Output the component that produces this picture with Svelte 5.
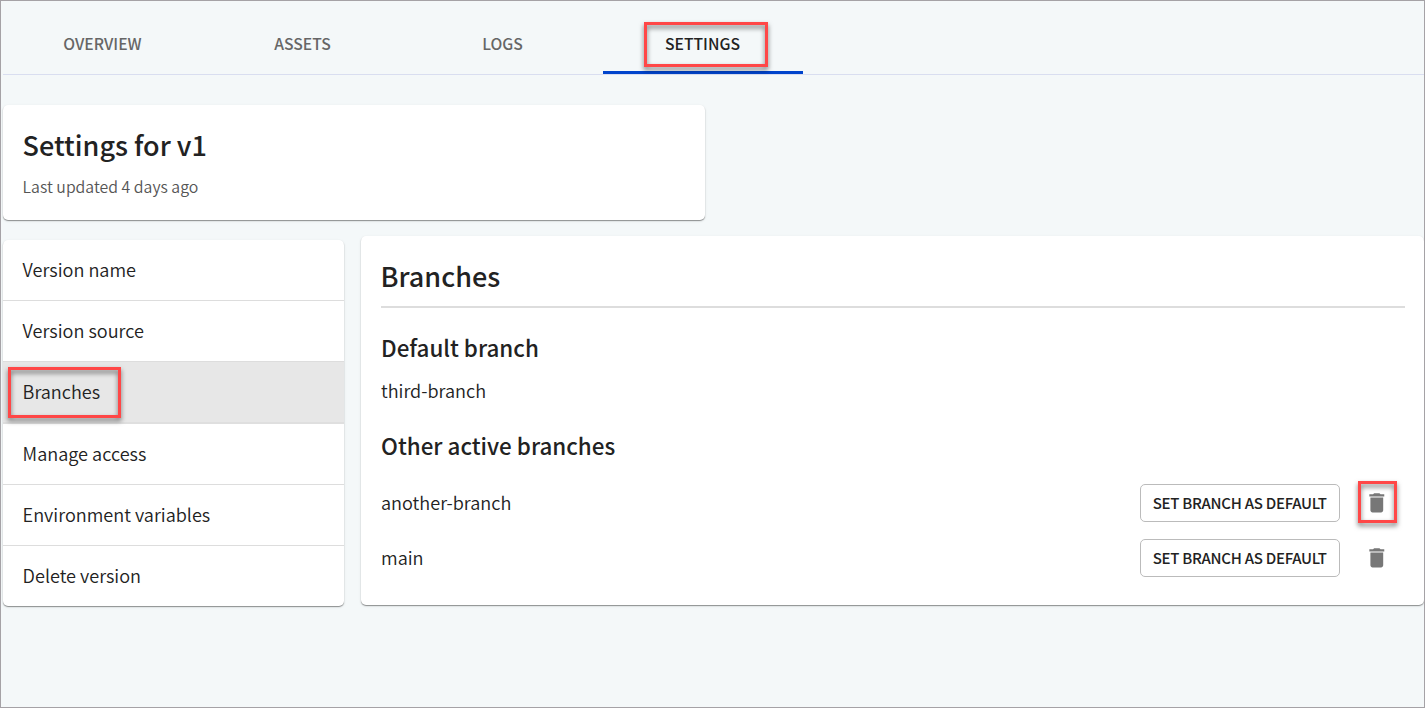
<script>
  const tabs = ['Overview', 'Assets', 'Logs', 'Settings'];
  const items = ['Version name', 'Version source', 'Branches', 'Manage access', 'Environment variables', 'Delete version'];
  const branches = ['another-branch', 'main'];
</script>

<div class="page">
  <nav class="tabs">
    {#each tabs as tab}
      <a class="tab" class:active={tab === 'Settings'}>
        <span class:marked={tab === 'Settings'}>{tab}</span>
      </a>
    {/each}
  </nav>

  <header class="card title-card">
    <h1>Settings for v1</h1>
    <p>Last updated 4 days ago</p>
  </header>

  <div class="columns">
    <ul class="card menu">
      {#each items as item}
        <li class:selected={item === 'Branches'}>
          <span class:marked={item === 'Branches'}>{item}</span>
        </li>
      {/each}
    </ul>

    <main class="card panel">
      <h2>Branches</h2>
      <h3>Default branch</h3>
      <p class="default-name">third-branch</p>
      <h3 class="other">Other active branches</h3>
      {#each branches as branch, i}
        <div class="branch">
          <span class="name">{branch}</span>
          <button class="set">Set branch as default</button>
          <button class="delete" class:marked={i === 0} aria-label="Delete branch">
            <svg viewBox="0 0 24 24" width="25.6" height="25.6">
              <path d="M6 19c0 1.1.9 2 2 2h8c1.100 0 2-.9 2-2V7H6v12zM19 4h-3.500l-1-1h-5l-1 1H5v2h14V4z" />
            </svg>
          </button>
        </div>
      {/each}
    </main>
  </div>
</div>

<style>
  :global(body) { margin: 0; background: #f4f7f9; }
  :global(*), :global(*::after) { box-sizing: border-box; }

  .page {
    width: 1425px;
    height: 708px;
    border: 1px solid #a5a2a6;
    padding-left: 2px;
    background: #f4f8f9;
    color: #222;
    font-family: "Noto Sans CJK SC", "Open Sans", sans-serif;
    font-size: 18.1px;
    font-weight: 350;
    overflow: hidden;
  }
  h1, h2, h3, p, ul { margin: 0; padding: 0; }
  h1, h2, h3 { font-weight: 500; }

  .tabs {
    display: flex;
    height: 74px;
    border-bottom: 1px solid #d9def0;
  }
  .tab {
    position: relative;
    display: flex;
    justify-content: center;
    width: 200px;
    padding: 31px 1px 0 0;
    font-size: 15.7px;
    line-height: 24px;
    font-weight: 500;
    text-transform: uppercase;
    color: #666;
  }
  .tab.active {
    color: #222;
    border-bottom: 3px solid #0044cc;
  }
  .marked { position: relative; }
  .marked::after {
    content: "";
    position: absolute;
    border: 3px solid #ff4747;
    filter: drop-shadow(0 3px 2.5px rgba(0, 0, 0, 0.55));
    pointer-events: none;
    z-index: 2;
  }
  .tab .marked::after { left: calc(50% - 58.5px); top: -10px; width: 124px; height: 45px; }

  .card {
    background: #fff;
    border-radius: 5px;
    box-shadow: 0 1px 1px rgba(0, 0, 0, 0.38), 0 1px 3px rgba(0, 0, 0, 0.1);
  }
  .title-card {
    width: 702px;
    height: 115px;
    margin-top: 30px;
    padding: 20px 20px 0;
  }
  h1, h2 { font-size: 27px; line-height: 40px; }
  h1 { margin-left: -0.4px; }
  h2 { text-indent: -0.5px; }
  .title-card p {
    margin-top: 10px;
    margin-left: -0.4px;
    font-size: 15.85px;
    line-height: 24px;
    color: #555;
  }

  .columns { display: flex; align-items: flex-start; margin-top: 16px; }
  .menu { width: 341px; margin-top: 4px; list-style: none; overflow: hidden; }
  li {
    height: 61px;
    padding: 0 19.600px;
    line-height: 58px;
    border-bottom: 1px solid #ddd;
  }
  li:last-child { border: 0; height: 60px; }
  li.selected { height: 62px; background: #e7e7e7; border-bottom: 2px solid #dfdfdf; }
  li .marked { display: inline-block; }
  li .marked::after { left: -14.600px; top: 5px; width: 113px; height: 51px; }

  .panel {
    width: 1063px;
    height: 369px;
    margin-left: 17px;
    padding: 20px 19px 0 20px;
  }
  h2 { height: 52px; border-bottom: 2px solid #ddd; }
  h3 { margin-top: 23px; font-size: 22.4px; line-height: 32px; }
  .default-name { margin-top: 13px; line-height: 28px; }
  h3.other { margin-top: 25px; margin-bottom: 14px; }
  .branch { display: flex; align-items: center; height: 55px; }
  .name { flex: 1; padding-bottom: 2px; }
  button { font: inherit; color: inherit; padding: 0; background: none; }
  .set {
    width: 200px;
    height: 38px;
    border: 1px solid #bbb;
    border-radius: 5px;
    font-size: 15px;
    font-weight: 500;
    line-height: 36px;
    letter-spacing: -0.27px;
    text-indent: -0.5px;
    text-transform: uppercase;
    white-space: nowrap;
  }
  .delete {
    display: flex;
    justify-content: center;
    align-items: center;
    width: 39px;
    height: 42px;
    margin: 0 8px 1px 18px;
    padding: 1.4px 0.6px 0 0;
    border: 0;
  }
  .delete svg { fill: #777; }
  .delete.marked::after { inset: 0; }
</style>
